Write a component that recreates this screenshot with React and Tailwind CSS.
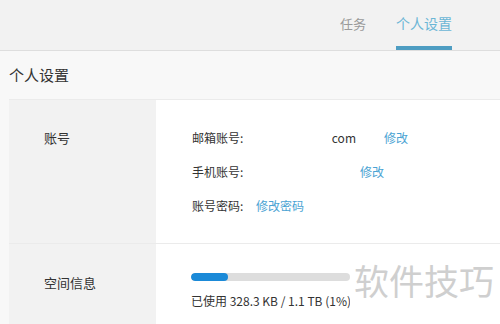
export default function App() {
    const font = {fontFamily: '"Noto Sans CJK SC", "Liberation Sans", sans-serif'}

    return (
        <div style={font} className="w-[500px] h-[324px] overflow-hidden bg-[#f8f8f8] relative text-[#333]">
            <div className="h-[51px] bg-[#f2f2f2] border-b border-[#dedede] flex justify-end items-end pr-[48px]">
                <div className="flex gap-[30px] items-end">
                    <div className="h-[50px] flex items-center text-[13px] text-[#9a9a9a] pb-[2px]">任务</div>
                    <div className="h-[50px] flex flex-col items-center justify-between">
                        <div className="flex-1 flex items-center text-[14px] text-[#6bb6d6] pt-[1px]">个人设置</div>
                        <div className="w-[56px] h-[4px] bg-[#4e9dc2]"></div>
                    </div>
                </div>
            </div>

            <div className="h-[48px] flex items-center pl-[9px] text-[15px] text-[#333]">个人设置</div>

            <div className="ml-[9px] border-t border-[#ebebeb] flex flex-col">
                <div className="flex border-b border-[#ebebeb]">
                    <div className="w-[147px] bg-[#f2f2f2] pl-[35px] pt-[21px]">
                        <div className="h-[34px] flex items-center text-[13px]">账号</div>
                    </div>
                    <div className="flex-1 bg-white pl-[36px] pt-[21px] pb-[20px] text-[12px]">
                        <div className="h-[34px] flex items-center">
                            <span className="w-[64px]">邮箱账号:</span>
                            <span className="w-[100px] text-right">com</span>
                            <span className="ml-[28px] text-[#4aa3d3]">修改</span>
                        </div>
                        <div className="h-[34px] flex items-center">
                            <span className="w-[64px]">手机账号:</span>
                            <span className="ml-[104px] text-[#4aa3d3]">修改</span>
                        </div>
                        <div className="h-[34px] flex items-center">
                            <span className="w-[64px]">账号密码:</span>
                            <span className="text-[#4aa3d3]">修改密码</span>
                        </div>
                    </div>
                </div>
                <div className="flex h-[90px]">
                    <div className="w-[147px] bg-[#f2f2f2] pl-[35px] pt-[29px]">
                        <div className="h-[20px] flex items-center text-[13px]">空间信息</div>
                    </div>
                    <div className="flex-1 bg-white pl-[35px] pt-[29px] text-[12px]">
                        <div className="w-[159px] h-[8px] rounded-full bg-[#dddddd] overflow-hidden">
                            <div className="w-[37px] h-full rounded-full bg-[#1b8ad8]"></div>
                        </div>
                        <div className="mt-[11px] w-[159px] whitespace-nowrap overflow-hidden">已使用 328.3 KB / 1.1 TB (1%)</div>
                    </div>
                </div>
            </div>

            <div className="absolute left-[354px] top-[256px] bg-white text-[35px] leading-[48px] text-[#cfcfcf] whitespace-nowrap pr-[4px]">软件技巧</div>
        </div>
    );
}
